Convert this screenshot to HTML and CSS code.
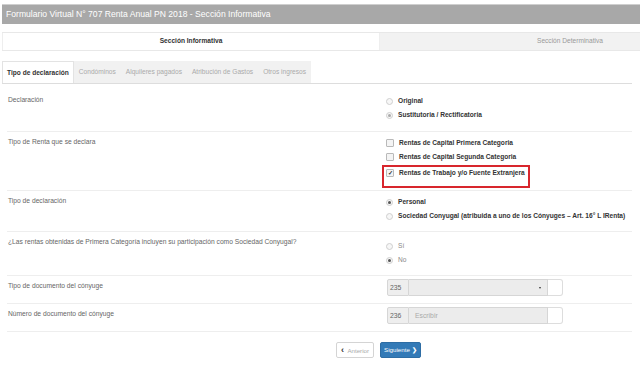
FILE: index.html
```html
<!DOCTYPE html>
<html>
<head>
  <title>Formulario Virtual 707</title>
  <link rel="stylesheet" href="styles.css">
</head>
<body>
  <div class="page">
    <div class="title-bar">Formulario Virtual N° 707 Renta Anual PN 2018 - Sección Informativa</div>

    <div class="sections">
      <div class="section section-active">Sección Informativa</div>
      <div class="section section-alt">Sección Determinativa</div>
    </div>

    <div class="tabs">
      <div class="tab tab-active">Tipo de declaración</div>
      <div class="tab">Condóminos</div>
      <div class="tab">Alquileres pagados</div>
      <div class="tab">Atribución de Gastos</div>
      <div class="tab">Otros ingresos</div>
    </div>

    <div class="tab-content">
      <div class="row row-declaracion">
        <div class="label">Declaración</div>
        <div class="options">
          <div class="option"><span class="radio"></span>Original</div>
          <div class="option"><span class="radio radio-disabled"></span>Sustitutoria / Rectificatoria</div>
        </div>
      </div>

      <div class="row row-renta">
        <div class="label">Tipo de Renta que se declara</div>
        <div class="options">
          <div class="option"><span class="check"></span>Rentas de Capital Primera Categoria</div>
          <div class="option"><span class="check"></span>Rentas de Capital Segunda Categoria</div>
          <div class="highlight">
            <div class="option"><span class="check check-on">&#10003;</span>Rentas de Trabajo y/o Fuente Extranjera</div>
          </div>
        </div>
      </div>

      <div class="row row-tipo">
        <div class="label">Tipo de declaración</div>
        <div class="options">
          <div class="option"><span class="radio radio-on"></span>Personal</div>
          <div class="option"><span class="radio"></span>Sociedad Conyugal (atribuida a uno de los Cónyuges – Art. 16° L IRenta)</div>
        </div>
      </div>

      <div class="row row-conyugal">
        <div class="label">¿Las rentas obtenidas de Primera Categoría incluyen su participación como Sociedad Conyugal?</div>
        <div class="options options-light">
          <div class="option"><span class="radio"></span>Sí</div>
          <div class="option"><span class="radio radio-on"></span>No</div>
        </div>
      </div>

      <div class="row row-field">
        <div class="label">Tipo de documento del cónyuge</div>
        <div class="input-group">
          <span class="addon">235</span>
          <span class="field">&nbsp;<span class="caret"></span></span>
          <span class="tail"></span>
        </div>
      </div>

      <div class="row row-field">
        <div class="label">Número de documento del cónyuge</div>
        <div class="input-group">
          <span class="addon">236</span>
          <span class="field placeholder">Escribir</span>
          <span class="tail"></span>
        </div>
      </div>
    </div>

    <div class="actions">
      <button class="btn btn-default"><span class="chev">&#8249;</span> Anterior</button>
      <button class="btn btn-primary">Siguiente <span class="chev-bold">&#10095;</span></button>
    </div>
  </div>
</body>
</html>
```

FILE: styles.css
```css
body {
  margin: 0;
  font-family: "Liberation Sans", Arial, sans-serif;
  background-color: #ffffff;
  color: #555;
}

.page {
  padding: 4px 0 0 2px;
}

.title-bar {
  height: 19px;
  line-height: 19px;
  padding-left: 4px;
  background-color: #a8a8a8;
  border-top: 1px solid #cfcfcf;
  color: #ffffff;
  font-size: 8.6px;
}

.sections {
  display: flex;
  height: 17px;
  margin-top: 8px;
  border-top: 1px solid #e8e8e8;
  border-bottom: 1px solid #e8e8e8;
  font-size: 6.6px;
  line-height: 16px;
}

.section {
  flex: none;
  width: 376px;
  text-align: center;
  border-left: 1px solid #eeeeee;
}

.section-active {
  color: #333;
  font-weight: bold;
}

.section-alt {
  flex: 1;
  width: auto;
  text-align: left;
  padding-left: 157px;
  background-color: #f2f2f2;
  color: #999;
}

.tabs {
  display: flex;
  height: 22px;
  margin: 10px 8px 0 0;
  border-bottom: 1px solid #dddddd;
  font-size: 6.6px;
  line-height: 22px;
}

.tab {
  padding: 0 5px;
  background-color: #f1f1f1;
  color: #aaa;
}

.tab-active {
  padding: 0 4px;
  background-color: #ffffff;
  color: #333;
  font-weight: bold;
  border: 1px solid #e3e3e3;
  border-bottom: none;
}

.tab-content {
  padding: 6px 8px 0 5px;
  font-size: 6.7px;
  line-height: 10px;
}

.row {
  display: grid;
  grid-template-columns: 379px 1fr;
  padding: 5px 0 10px;
  border-bottom: 1px solid #eeeeee;
}

.row-declaracion {
  padding-bottom: 11px;
}

.row-renta {
  padding-bottom: 2px;
}

.row-conyugal .options {
  padding-top: 4px;
}

.row-field {
  padding: 3px 0 7px;
}

.row-field .label {
  padding-top: 2px;
}

.label {
  padding-left: 1px;
  color: #666;
}

.options {
  display: flex;
  flex-direction: column;
  gap: 4px;
  padding-top: 1px;
}

.option {
  display: flex;
  align-items: center;
  height: 10px;
  color: #333;
  font-weight: bold;
  font-size: 6.6px;
  white-space: nowrap;
}

.options-light .option {
  color: #888;
  font-weight: normal;
}

.radio {
  flex: none;
  position: relative;
  width: 5px;
  height: 5px;
  margin-right: 5px;
  border: 1px solid #cfcfcf;
  border-radius: 50%;
  background-color: #f7f7f7;
}

.radio-on::after,
.radio-disabled::after {
  content: "";
  position: absolute;
  left: 1px;
  top: 1px;
  width: 3px;
  height: 3px;
  border-radius: 50%;
  background-color: #555;
}

.radio-disabled::after {
  background-color: #aaa;
}

.check {
  flex: none;
  width: 6px;
  height: 6px;
  margin-right: 5px;
  border: 1px solid #b9b9b9;
  border-radius: 1px;
  background-color: #f4f4f4;
  font-size: 6px;
  line-height: 6px;
  text-align: center;
  color: #333;
}

.highlight {
  align-self: flex-start;
  margin: -1px 0 0 -4px;
  padding: 1px 3px 8px 2px;
  border: 2px solid #d8262d;
}

.input-group {
  display: flex;
  height: 17px;
  margin-left: 1px;
  width: 176px;
  font-size: 6.8px;
  line-height: 15px;
}

.addon {
  width: 18px;
  padding-left: 2px;
  background-color: #eeeeee;
  border: 1px solid #d6d6d6;
  border-radius: 2px 0 0 2px;
  color: #666;
}

.field {
  position: relative;
  width: 132px;
  padding-left: 6px;
  background-color: #ececec;
  border: 1px solid #d6d6d6;
  border-left: none;
}

.placeholder {
  color: #aaa;
}

.caret {
  position: absolute;
  right: 6px;
  top: 7px;
  border-left: 1.5px solid transparent;
  border-right: 1.5px solid transparent;
  border-top: 2.5px solid #333;
}

.tail {
  flex: 1;
  border: 1px solid #dddddd;
  border-left: none;
  border-radius: 0 3px 3px 0;
  background-color: #ffffff;
}

.actions {
  display: flex;
  gap: 6px;
  padding: 10px 0 0 334px;
}

.btn {
  height: 16px;
  padding: 0 4px;
  font-family: "Liberation Sans", Arial, sans-serif;
  font-size: 6.2px;
  line-height: 14px;
  white-space: nowrap;
  border-radius: 2px;
}

.btn-default {
  background-color: #ffffff;
  border: 1px solid #d4d4d4;
  color: #aaa;
}

.chev {
  color: #333;
  font-size: 9px;
  font-weight: bold;
  margin-right: 2px;
}

.btn-primary {
  padding: 0 3px;
  background-color: #337ab7;
  border: 1px solid #2e6da4;
  color: #ffffff;
}

.chev-bold {
  font-size: 6px;
  font-weight: bold;
}
```
